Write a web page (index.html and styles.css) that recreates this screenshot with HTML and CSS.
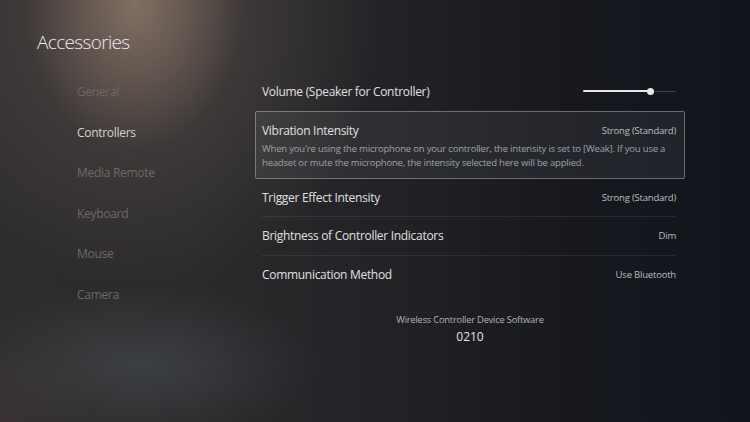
FILE: index.html
```html
<!DOCTYPE html>
<html lang="en">
<head>
<meta charset="utf-8">
<title>Accessories</title>
<link rel="stylesheet" href="styles.css">
</head>
<body>
<div class="screen">
  <header class="header"><h1 class="title">Accessories</h1></header>
  <div class="main">
    <nav class="nav">
      <div class="nav-item">General</div>
      <div class="nav-item active">Controllers</div>
      <div class="nav-item">Media Remote</div>
      <div class="nav-item">Keyboard</div>
      <div class="nav-item">Mouse</div>
      <div class="nav-item">Camera</div>
    </nav>
    <section class="panel">
      <div class="row">
        <span class="label">Volume (Speaker for Controller)</span>
        <div class="slider">
          <div class="slider-fill" style="width:72%"></div>
          <div class="slider-knob"></div>
          <div class="slider-rest"></div>
        </div>
      </div>
      <div class="row-box">
        <div class="box-head">
          <span class="label">Vibration Intensity</span>
          <span class="value">Strong (Standard)</span>
        </div>
        <p class="desc">When you're using the microphone on your controller, the intensity is set to [Weak]. If you use a headset or mute the microphone, the intensity selected here will be applied.</p>
      </div>
      <div class="row divided">
        <span class="label">Trigger Effect Intensity</span>
        <span class="value">Strong (Standard)</span>
      </div>
      <div class="row divided">
        <span class="label">Brightness of Controller Indicators</span>
        <span class="value">Dim</span>
      </div>
      <div class="row">
        <span class="label">Communication Method</span>
        <span class="value">Use Bluetooth</span>
      </div>
      <div class="software">
        <div class="software-label">Wireless Controller Device Software</div>
        <div class="software-version">0210</div>
      </div>
    </section>
  </div>
</div>
</body>
</html>
```

FILE: styles.css
```css
* { box-sizing: border-box; }
html, body { margin: 0; padding: 0; }
body {
  width: 750px;
  height: 422px;
  overflow: hidden;
  font-family: "Open Sans", Roboto, sans-serif;
  color: #dedede;
}
.screen {
  width: 750px;
  height: 422px;
  background:
    radial-gradient(ellipse 110px 150px at 135px 0px, rgba(150,128,112,0.7), rgba(150,128,112,0) 100%),
    radial-gradient(ellipse 240px 270px at 140px 20px, rgba(110,96,88,0.5), rgba(110,96,88,0) 100%),
    radial-gradient(ellipse 180px 80px at 140px 365px, rgba(80,88,92,0.45), rgba(80,88,92,0) 100%),
    radial-gradient(ellipse 90px 80px at 0px 422px, rgba(75,55,55,0.4), rgba(75,55,55,0) 100%),
    linear-gradient(90deg, #2e2c2d 0%, #2b2a2c 25%, #232327 50%, #17191f 75%, #12141c 100%);
}
.header {
  height: 72px;
  padding: 29px 0 0 37px;
}
.title {
  margin: 0;
  font-size: 19px;
  line-height: 26px;
  font-weight: 300;
  color: #ececec;
  letter-spacing: -0.65px;
}
.main {
  display: flex;
}
.nav {
  width: 255px;
  padding-left: 77px;
}
.nav-item {
  height: 40.6px;
  line-height: 40.6px;
  font-size: 12px;
  color: #6c6967;
  letter-spacing: -0.3px;
}
.nav-item.active { color: #d4d4d4; }
.panel {
  width: 430px;
  display: flex;
  flex-direction: column;
}
.row {
  height: 38.5px;
  margin: 0 9px 0 7px;
  display: flex;
  align-items: center;
  justify-content: space-between;
}
.row.divided { border-bottom: 1px solid rgba(255,255,255,0.08); }
.label {
  font-size: 12px;
  color: #e0e0e0;
  letter-spacing: -0.3px;
}
.value {
  font-size: 9.5px;
  color: #bdbdbd;
  letter-spacing: -0.2px;
}
.slider {
  position: relative;
  width: 93px;
  height: 8px;
  display: flex;
  align-items: center;
}
.slider-fill {
  height: 2px;
  background: #e6e6e6;
  border-radius: 1px;
}
.slider-knob {
  width: 7px;
  height: 7px;
  border-radius: 50%;
  background: #e8e8e8;
  margin-left: -3px;
  flex-shrink: 0;
}
.slider-rest {
  flex: 1;
  height: 1px;
  background: rgba(255,255,255,0.2);
}
.row-box {
  height: 68px;
  border: 1px solid rgba(255,255,255,0.32);
  border-radius: 2px;
  background: rgba(255,255,255,0.06);
  padding: 11px 8px 0 6px;
}
.box-head {
  display: flex;
  justify-content: space-between;
  align-items: center;
  height: 16px;
}
.desc {
  margin: 3px 0 0;
  font-size: 9.5px;
  line-height: 14px;
  color: #9ea1a8;
  letter-spacing: -0.2px;
}
.software {
  margin-top: 19px;
  text-align: center;
}
.software-label {
  font-size: 9.3px;
  color: #b4b4b6;
  letter-spacing: -0.2px;
  line-height: 14px;
}
.software-version {
  margin-top: 2px;
  font-size: 12px;
  color: #e4e4e4;
  line-height: 16px;
}
```
